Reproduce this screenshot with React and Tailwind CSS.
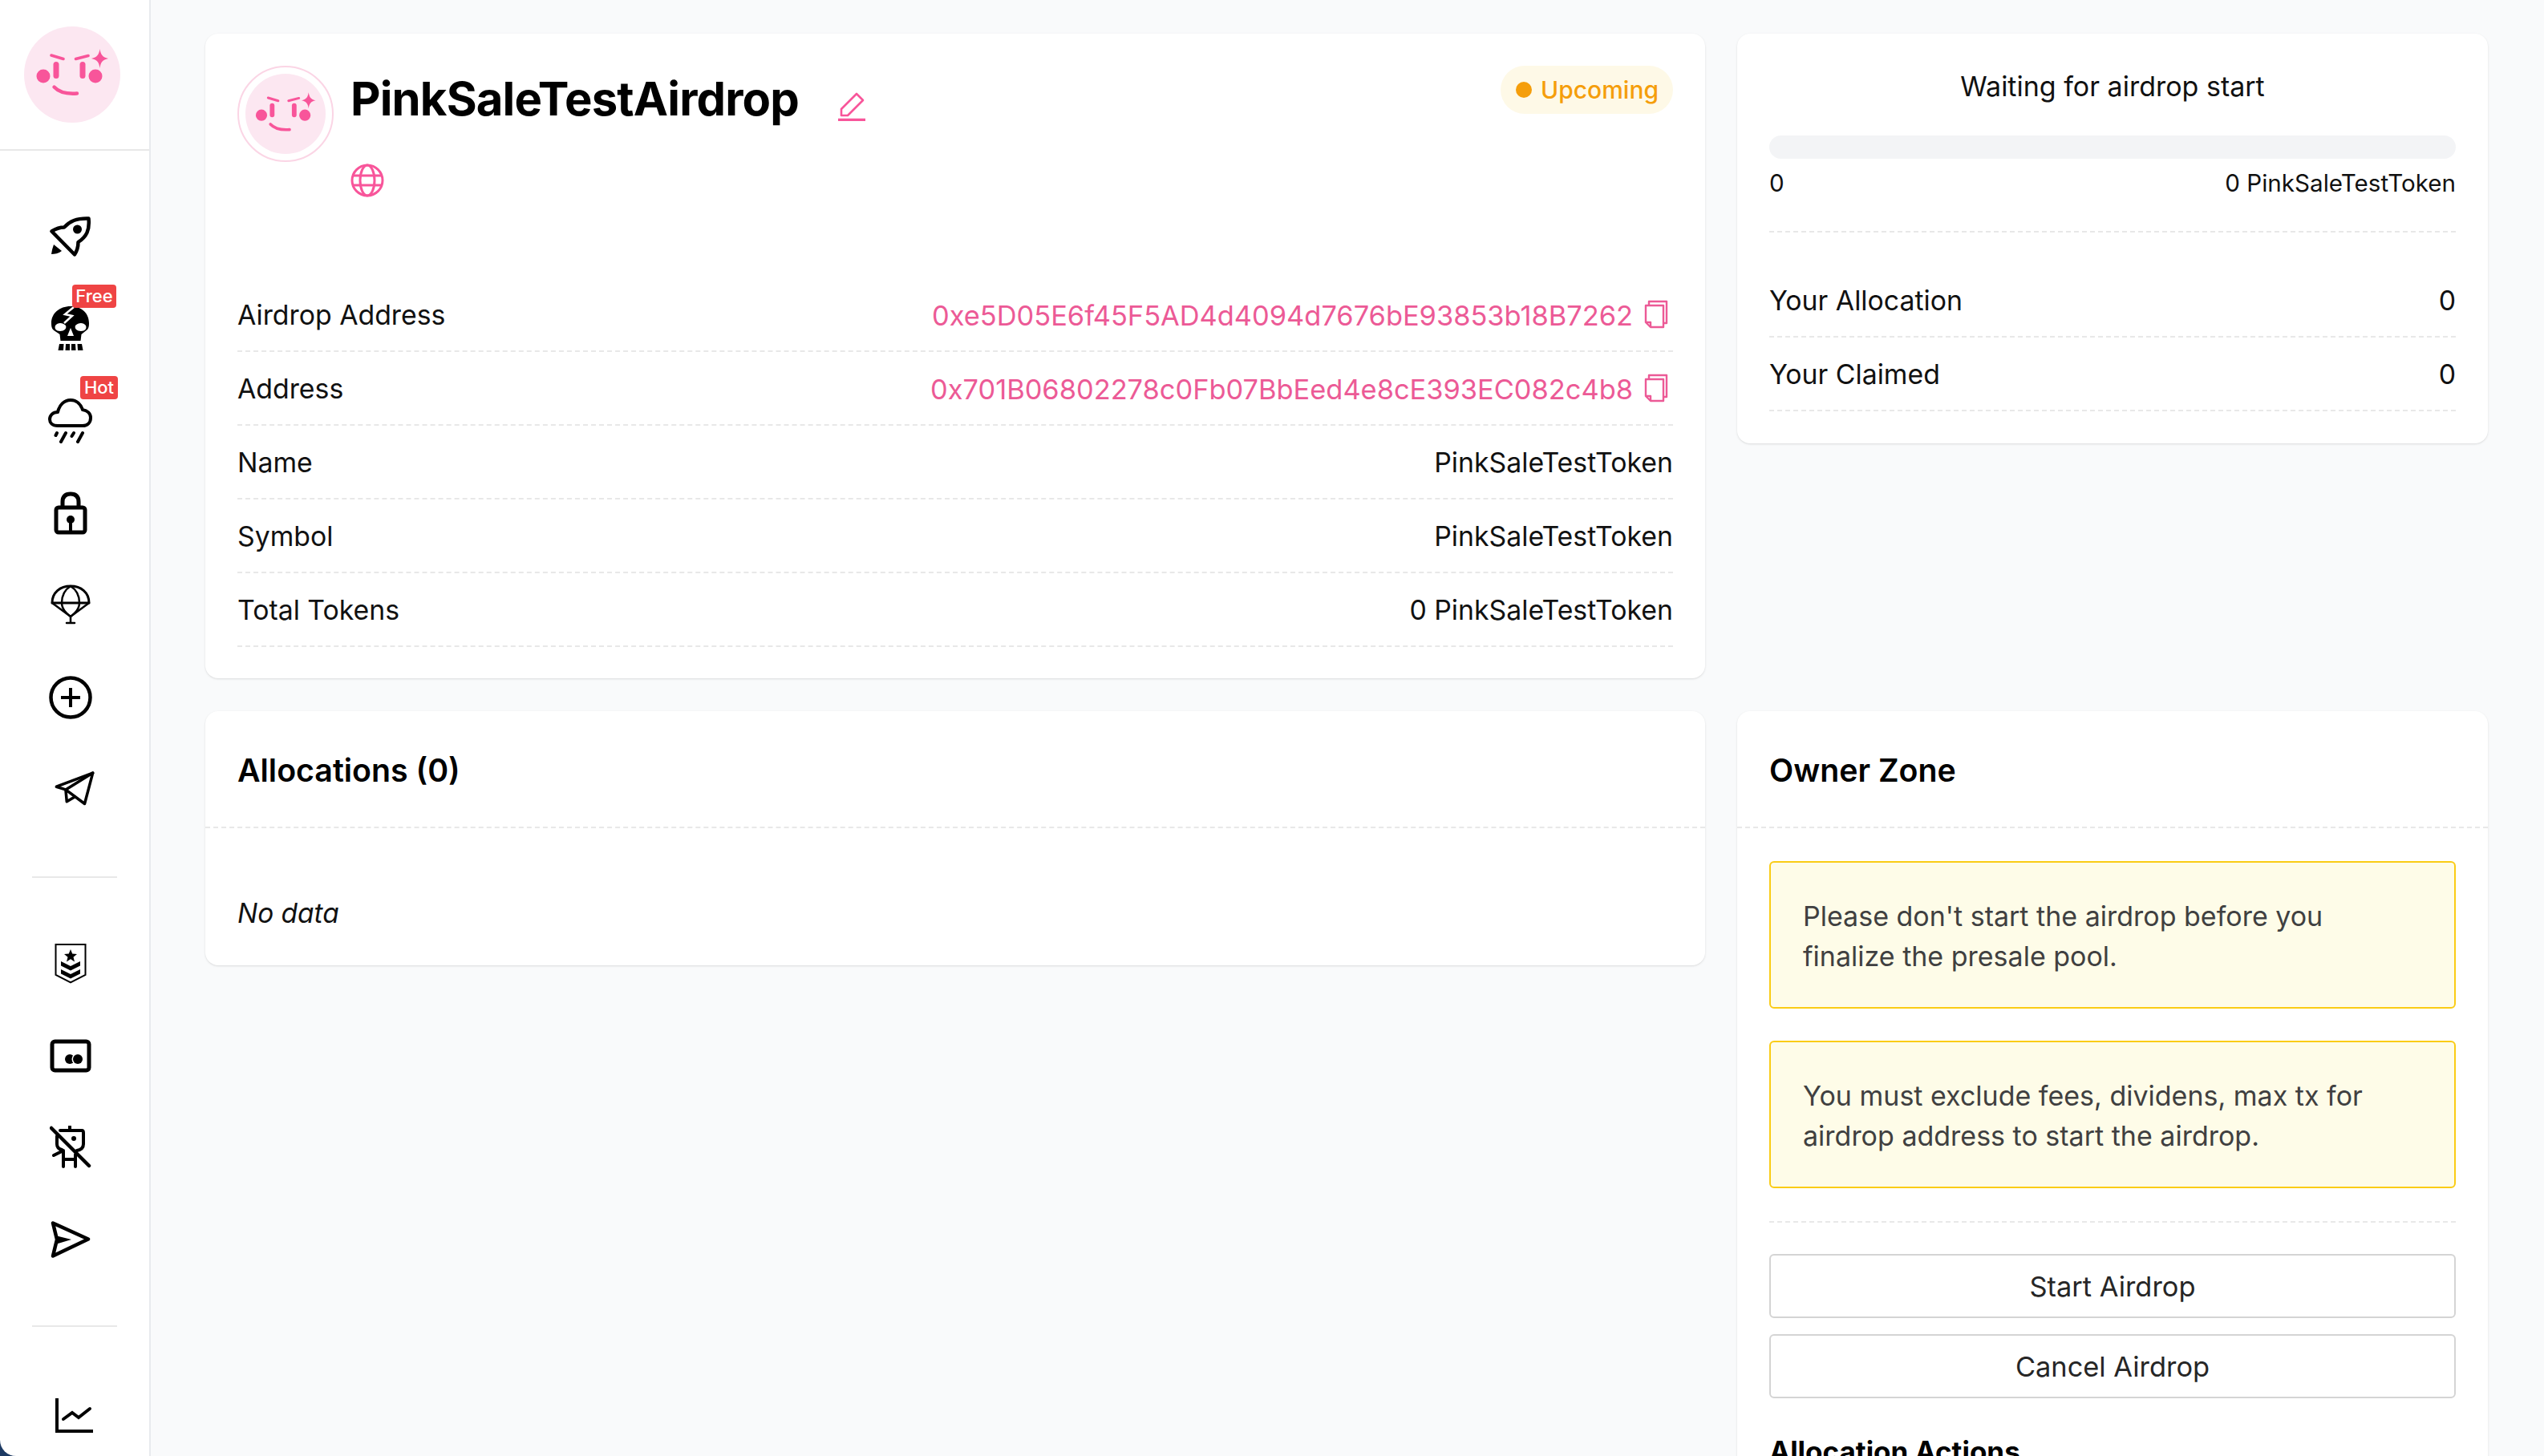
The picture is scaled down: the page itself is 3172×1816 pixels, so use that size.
import React from "react";

const Face = ({ className }) => (
  <svg viewBox="0 0 120 120" className={className}>
    <circle cx="60" cy="60" r="60" fill="#fce7f1" />
    <g fill="#f8559a">
      <circle cx="24" cy="62" r="8.5" />
      <circle cx="89" cy="62" r="8.5" />
      <rect x="36.5" y="44" width="7" height="21" rx="3.5" />
      <rect x="69.5" y="44" width="7" height="21" rx="3.5" />
      <path d="M94.5 28 C95.5 35 98 38.500 105 40 C98 41.500 95.500 44.500 94.500 52 C93.500 44.500 91 41.500 84 40 C91 38.500 93.500 35 94.500 28Z" />
    </g>
    <g fill="none" stroke="#f8559a" strokeWidth="3.6" strokeLinecap="round">
      <path d="M34 36 L49 40.500" />
      <path d="M64.500 40.500 L80 36.500" />
      <path strokeWidth="4.400" d="M37.500 75.500 C44 82.500 53 84.500 66 83.500" />
    </g>
  </svg>
);

const S = ({ w, h, children, className = "" }) => (
  <svg width={w} height={h} viewBox={`0 0 ${w} ${h}`} fill="none" stroke="#000" strokeLinecap="round" strokeLinejoin="round" className={className}>
    {children}
  </svg>
);

const Rocket = () => (
  <S w={52} h={50}>
    <path strokeWidth="4.500" d="M2.500 18.500 C8 15 12 13.500 18 13.500 C25 6 33 2 48.500 2.500 C50 17 46 25 35.500 32 C35.500 38 34 43 31 47.500 Z" />
    <circle cx="34.500" cy="16" r="5.500" fill="#000" stroke="none" />
    <path fill="#000" stroke="none" d="M5 35 L15 43 C11 46 6 47 2 47 C2.500 43 3.500 39 5 35Z" />
  </S>
);

const Skull = () => (
  <svg width="50" height="56" viewBox="0 0 50 56">
    <path fill="#000" d="M25 0 C39 0 48 9 48 21 C48 25 47.500 27 46 29 C43.500 31 41 33 38.500 35 L37.500 43 L12.500 43 L11.500 35 C9 33 5 31 3 29 C1.500 27 1 25 1 21 C1 9 11 0 25 0Z" />
    <path fill="#fff" d="M6 24 C9 20 15 20 19 24 C20.500 28 17 31 12 31 C7 31 4.500 28 6 24Z M44 24 C41 20 35 20 31 24 C29.500 28 33 31 38 31 C43 31 45.500 28 44 24Z M25 27 L29 37 L21 37 Z" />
    <path fill="none" stroke="#fff" strokeWidth="2.500" d="M29 1 L18 10 L27 12 L17 21" />
    <path fill="#000" d="M11 47 L16.500 47 L16 55 L9.500 55Z M19 47 L24 47 L24 55 L18.500 55Z M26 47 L31 47 L31.500 55 L26 55Z M33.500 47 L39 47 L40.500 55 L34 55Z" />
  </svg>
);

const Cloud = () => (
  <S w={56} h={56}>
    <path strokeWidth="4" d="M12 34 C5 34 2 30 2 26 C2 21 6 17 12 17 C14 8 20 2 28 2 C36 2 41 8 43 14 C49 15 53 19 53 24 C53 30 49 34 43 34 Z" />
    <path strokeWidth="4" d="M11 43 L9.500 46 M22 43 L16 54 M32 43 L29.500 47 M43 43 L37 54" />
  </S>
);

const Lock = () => (
  <S w={42} h={54} className="mt-[2px]">
    <rect x="3" y="20" width="36" height="31" rx="3" strokeWidth="5" />
    <path strokeWidth="5" d="M11 19 L11 13 C11 6 15 3 21 3 C27 3 31 6 31 13 L31 19" />
    <circle cx="21" cy="35" r="5" fill="#000" stroke="none" />
    <path strokeWidth="4" strokeLinecap="butt" d="M21 36 L21 49" />
  </S>
);

const Parachute = () => (
  <S w={50} h={50}>
    <path strokeWidth="3" d="M2 23 C2 10 12 2 25 2 C38 2 48 10 48 23 Z" />
    <path strokeWidth="2.500" d="M25 2 C17 7 14 14 14 23 C14 29 18 35 25 40 C32 35 36 29 36 23 C36 14 33 7 25 2Z" />
    <path strokeWidth="2.500" d="M2 23 L25 40 L48 23 M25 40 L25 47 M20 48 L30 48" />
  </S>
);

const Plus = () => (
  <S w={54} h={54} className="mt-[2px]">
    <circle cx="27" cy="27" r="24.500" strokeWidth="4.500" />
    <path strokeWidth="4" strokeLinecap="butt" d="M15 27 L39 27 M27 15 L27 39" />
  </S>
);

const Plane = () => (
  <S w={54} h={48} className="ml-[10px] mt-[2px]">
    <path strokeWidth="3.800" d="M2.500 21 L51.500 2.500 L40.500 44 L15 25 Z" />
    <path strokeWidth="3.800" d="M51.500 2.500 L15 25 L16.500 41 L27.500 34.500" />
  </S>
);

const Shield = () => (
  <svg width="40" height="50" viewBox="0 0 40 50">
    <path fill="none" stroke="#000" strokeWidth="2" d="M1.500 1 L38.500 1 L38.500 39 L20 48.500 L1.500 39Z" />
    <path fill="#000" d="M20 7 L22.200 12.500 L28 13 L23.500 16.700 L25 22.500 L20 19.300 L15 22.500 L16.500 16.700 L12 13 L17.800 12.500Z" />
    <path fill="#000" d="M8 22 L20 28 L32 22 L32 27.500 L20 33.500 L8 27.500Z M8 32 L20 38 L32 32 L32 37.500 L20 43.500 L8 37.500Z" />
  </svg>
);

const Card = () => (
  <svg width="52" height="42" viewBox="0 0 52 42">
    <rect x="3" y="3" width="46" height="36" rx="3.500" fill="none" stroke="#000" strokeWidth="5" />
    <circle cx="25" cy="25" r="6" fill="#000" />
    <circle cx="35" cy="25" r="7.500" fill="#fff" />
    <circle cx="35" cy="25" r="6" fill="#000" />
  </svg>
);

const Robot = () => (
  <S w={52} h={54}>
    <path strokeWidth="4.500" d="M2 3 L49 50" />
    <path strokeWidth="4" d="M13 6 L40 6 C41.500 6 42 7 42 9 L42 23 C42 27 39 30 34 31 M25 1 L25 6 M9 13 L9 23 C9 26 11 29 15 30 M5 37 L15 32 M17 31 L17 51 M32 36 L32 51 M17 42 L32 42" />
    <circle cx="30" cy="16" r="3" fill="#000" stroke="none" />
  </S>
);

const Send = () => (
  <S w={50} h={46}>
    <path strokeWidth="4.500" d="M3 2.500 L47 22.500 L3 43.500 L8 23 Z" />
    <path fill="#000" stroke="none" d="M6 18 L26 23 L6 29Z" />
  </S>
);

const Chart = () => (
  <svg width="48" height="44" viewBox="0 0 48 44" fill="none" stroke="#000" strokeWidth="4">
    <path d="M2 0 L2 41 L47 41" />
    <path strokeLinecap="round" strokeLinejoin="miter" d="M10 26 L21 18 L29 24 L43 13" />
  </svg>
);

const Pencil = () => (
  <svg width="36" height="36" viewBox="0 0 36 36" fill="none" stroke="#f8559a" strokeWidth="2.600" strokeLinejoin="round">
    <path d="M24 2 L32 10 L13 29 L5 29 L5 21 Z" />
    <path strokeWidth="3.500" d="M1 34.500 L35 34.500" />
  </svg>
);

const Globe = () => (
  <svg width="42" height="42" viewBox="0 0 42 42" fill="none" stroke="#f8559a" strokeWidth="3">
    <circle cx="21" cy="21" r="19" />
    <ellipse cx="21" cy="21" rx="9" ry="19" />
    <path d="M4 15 L38 15 M4 27 L38 27" />
  </svg>
);

const Copy = () => (
  <svg width="30" height="36" viewBox="0 0 30 36" fill="none" stroke="#ec5a96" strokeWidth="2.400" strokeLinejoin="round" className="ml-[14px] mr-[6px] mt-[-3px]">
    <path d="M6 7 L6 2 L28 2 L28 29 L24 29" />
    <path d="M2 7 L24 7 L24 34 L8 34 L2 28 Z" />
    <path d="M2 28 L8 28 L8 34" />
  </svg>
);

const Nav = ({ children, badge }) => (
  <div className="relative h-[114.67px] w-[60px] ml-[58px] flex items-center justify-center">
    {children}
    {badge === "Free" && (
      <span className="absolute left-[32px] top-[2px] h-[29px] w-[55px] rounded-[4px] bg-[#ef4444] text-white text-[22px] leading-[29px] font-medium text-center">Free</span>
    )}
    {badge === "Hot" && (
      <span className="absolute left-[42px] top-[2px] h-[29px] w-[47px] rounded-[4px] bg-[#ef4444] text-white text-[22px] leading-[29px] font-medium text-center">Hot</span>
    )}
  </div>
);

const Row = ({ label, children }) => (
  <div className="flex h-[92px] items-center justify-between border-b-2 border-dashed border-[#e8e8e8] pt-[3px] text-[33.8px] text-[#111]">
    <span>{label}</span>
    {children}
  </div>
);

const Addr = ({ children }) => (
  <span className="flex items-center text-[34.4px] text-[#ec5a96]">
    {children}
    <Copy />
  </span>
);

const Warn = ({ children }) => (
  <div className="rounded-[6px] border-2 border-[#facc15] bg-[#fefce8] px-[40px] pb-[38px] pt-[42px] text-[34px] leading-[50px] text-[#404040]">{children}</div>
);

const Btn = ({ children }) => (
  <button className="h-[80px] w-full rounded-[6px] border-2 border-[#d4d4d4] bg-white pt-[2px] text-center text-[34.4px] text-[#262626]">{children}</button>
);

export default function App() {
  return (
    <div className="flex h-[1816px] w-[3172px] overflow-hidden bg-[#1d3a63] font-['Inter',sans-serif]">
      <aside className="h-full w-[188px] shrink-0 rounded-bl-[20px] border-r-2 border-[#e8eaee] bg-white">
        <div className="flex h-[188px] items-start border-b-2 border-[#e8e8e8] pl-[30px] pt-[33px]">
          <Face className="h-[120px] w-[120px]" />
        </div>
        <nav className="pt-[50px]">
          <Nav><Rocket /></Nav>
          <Nav badge="Free"><Skull /></Nav>
          <Nav badge="Hot"><Cloud /></Nav>
          <Nav><Lock /></Nav>
          <Nav><Parachute /></Nav>
          <Nav><Plus /></Nav>
          <Nav><Plane /></Nav>
          <div className="ml-[40px] mt-[52px] mb-[50px] h-[2px] w-[106px] bg-[#e8e8e8]" />
          <Nav><Shield /></Nav>
          <Nav><Card /></Nav>
          <Nav><Robot /></Nav>
          <Nav><Send /></Nav>
          <div className="ml-[40px] mt-[50px] mb-[51px] h-[2px] w-[106px] bg-[#e8e8e8]" />
          <div className="flex justify-center pt-[38px]"><Chart /></div>
        </nav>
      </aside>

      <main className="grid flex-1 grid-cols-[1870px_936px] grid-rows-[804px_auto] content-start gap-x-[40px] gap-y-[41px] bg-[#f9fafb] pl-[68px] pt-[42px]">
        <section className="rounded-[16px] bg-white p-[40px] shadow-sm">
          <div className="flex h-[265px] items-start">
            <div className="flex h-[120px] w-[120px] shrink-0 items-center justify-center rounded-full border-2 border-[#fbd5e5] bg-white">
              <Face className="h-[100px] w-[100px]" />
            </div>
            <div className="ml-[21px] flex-1">
              <div className="flex items-start">
                <h1 className="text-[58px] font-bold leading-[82px] tracking-[-0.85px] text-black">PinkSaleTestAirdrop</h1>
                <span className="ml-[48px] mt-[33px]"><Pencil /></span>
              </div>
              <div className="mt-[40px]"><Globe /></div>
            </div>
            <div className="flex h-[60px] w-[215px] shrink-0 items-center gap-[11px] rounded-full bg-[#fef9e7] pl-[19px] text-[30px] font-medium text-[#f59e0b]">
              <span className="h-[20px] w-[20px] rounded-full bg-[#f59e0b]" />
              <span>Upcoming</span>
            </div>
          </div>
          <Row label="Airdrop Address"><Addr>0xe5D05E6f45F5AD4d4094d7676bE93853b18B7262</Addr></Row>
          <Row label="Address"><Addr>0x701B06802278c0Fb07BbEed4e8cE393EC082c4b8</Addr></Row>
          <Row label="Name"><span>PinkSaleTestToken</span></Row>
          <Row label="Symbol"><span>PinkSaleTestToken</span></Row>
          <Row label="Total Tokens"><span>0 PinkSaleTestToken</span></Row>
        </section>

        <section className="self-start rounded-[16px] bg-white px-[40px] pb-[40px] pt-[44px] shadow-sm">
          <div className="text-center text-[34px] leading-[44px] text-[#111]">Waiting for airdrop start</div>
          <div className="mt-[39px] h-[29px] rounded-full bg-[#f3f4f6]" />
          <div className="flex h-[60px] items-center justify-between text-[29.6px] text-[#111]">
            <span>0</span>
            <span>0 PinkSaleTestToken</span>
          </div>
          <div className="border-b-2 border-dashed border-[#e8e8e8] pt-[30px]" />
          <div className="h-[39px]" />
          <Row label="Your Allocation"><span>0</span></Row>
          <Row label="Your Claimed"><span>0</span></Row>
        </section>

        <section className="self-start rounded-[16px] bg-white shadow-sm">
          <h2 className="flex h-[146px] items-center border-b-2 border-dashed border-[#e8e8e8] px-[40px] pt-[4px] text-[39.3px] font-semibold text-black">Allocations (0)</h2>
          <div className="flex h-[171px] items-center px-[40px] pt-[41px] text-[33.4px] italic text-[#111]">No data</div>
        </section>

        <section className="rounded-t-[16px] bg-white shadow-sm">
          <h2 className="flex h-[146px] items-center border-b-2 border-dashed border-[#e8e8e8] px-[40px] pt-[4px] text-[39.3px] font-semibold text-black">Owner Zone</h2>
          <div className="px-[40px] pt-[41px]">
            <Warn>Please don't start the airdrop before you finalize the presale pool.</Warn>
            <div className="h-[40px]" />
            <Warn>You must exclude fees, dividens, max tx for airdrop address to start the airdrop.</Warn>
            <div className="mb-[39px] mt-[41px] border-b-2 border-dashed border-[#e8e8e8]" />
            <Btn>Start Airdrop</Btn>
            <div className="h-[20px]" />
            <Btn>Cancel Airdrop</Btn>
            <h3 className="mt-[44px] text-[35px] font-bold leading-[44px] text-black">Allocation Actions</h3>
          </div>
        </section>
      </main>
    </div>
  );
}
